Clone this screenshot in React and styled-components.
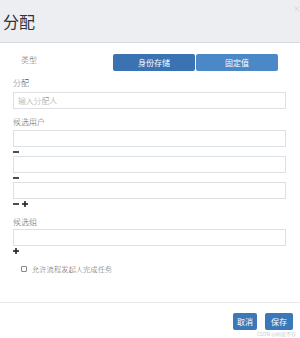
import React from "react";
import styled, { createGlobalStyle } from "styled-components";

const Global = createGlobalStyle`
  html, body { margin: 0; padding: 0; background: #fff; }
  body { font-family: "Noto Sans CJK SC", "Liberation Sans", sans-serif; }
  * { box-sizing: border-box; }
`;

const Dialog = styled.div`
  position: relative;
  width: 300px;
  height: 338px;
  display: flex;
  flex-direction: column;
  background: #fff;
  overflow: hidden;
`;

const Header = styled.div`
  height: 43px;
  flex: none;
  background: #eceef2;
  border-bottom: 1px solid #d6dae0;
  display: flex;
  align-items: center;
  padding-left: 3px;
  position: relative;
`;

const Title = styled.h3`
  margin: 0;
  font-size: 16px;
  font-weight: 400;
  color: #333;
  line-height: 1;
`;

const Close = styled.span`
  position: absolute;
  right: 0;
  top: 3px;
  font-size: 7px;
  color: #c8ccd2;
`;

const Body = styled.div`
  flex: 1;
  padding: 0 14px 0 13px;
  display: flex;
  flex-direction: column;
`;

const TypeRow = styled.div`
  display: flex;
  align-items: center;
  margin-top: 11px;
  height: 17px;
`;

const TypeLabel = styled.span`
  width: 100px;
  padding-left: 8px;
  font-size: 8px;
  font-weight: 300;
  color: #666;
  margin-top: -7px;
`;

const Toggle = styled.div`
  display: flex;
  gap: 1px;
`;

const ToggleButton = styled.button`
  width: 82px;
  height: 17px;
  border: none;
  border-radius: 2px;
  background: ${(p) => (p.$active ? "#3a72b2" : "#4a88c8")};
  color: #fff;
  font-family: inherit;
  font-size: 8px;
  padding: 0;
  line-height: 17px;
`;

const Label = styled.div`
  font-size: 8px;
  font-weight: 300;
  color: #666;
  line-height: 10px;
  margin-top: ${(p) => p.$mt || 0}px;
  margin-bottom: ${(p) => p.$mb || 3}px;
`;

const Input = styled.div`
  width: 273px;
  height: 17px;
  border: 1px solid #dcdfe3;
  background: #fff;
  font-size: 7.8px;
  font-weight: 300;
  color: #999;
  line-height: 15px;
  padding-left: 4px;
`;

const IconRow = styled.div`
  height: 9px;
  display: flex;
  align-items: center;
  gap: 3px;
  padding-top: 1px;
`;

const Glyph = ({ plus }) => (
  <svg width="6" height="6" viewBox="0 0 6 6">
    <rect x="0" y="2.2" width="6" height="1.6" fill="#222" />
    {plus && <rect x="2.2" y="0" width="1.6" height="6" fill="#222" />}
  </svg>
);

const CheckRow = styled.label`
  display: flex;
  align-items: center;
  gap: 5px;
  height: 10px;
  padding-left: 8px;
  margin-top: 9px;
  font-size: 7.3px;
  font-weight: 300;
  color: #666;
`;

const Box = styled.span`
  width: 6px;
  height: 6px;
  border: 1px solid #888;
  border-radius: 1px;
  background: #fff;
`;

const Footer = styled.div`
  flex: none;
  height: 36px;
  border-top: 1px solid #e6e8eb;
  display: flex;
  justify-content: flex-end;
  align-items: flex-start;
  gap: 8px;
  padding: 10px 7px 0 0;
`;

const FooterButton = styled.button`
  height: 17px;
  width: ${(p) => p.$w}px;
  border: none;
  border-radius: 2px;
  background: #3a78b8;
  color: #fff;
  font-family: inherit;
  font-size: 8px;
  padding: 0;
`;

const Watermark = styled.span`
  position: absolute;
  right: 4px;
  bottom: 1px;
  font-size: 5px;
  color: #c9ccd0;
`;

export default function App() {
  return (
    <Dialog>
      <Global />
      <Header>
        <Title>分配</Title>
        <Close>×</Close>
      </Header>
      <Body>
        <TypeRow>
          <TypeLabel>类型</TypeLabel>
          <Toggle>
            <ToggleButton $active>身份存储</ToggleButton>
            <ToggleButton>固定值</ToggleButton>
          </Toggle>
        </TypeRow>
        <Label $mt={7} $mb={4}>分配</Label>
        <Input>输入分配人</Input>
        <Label $mt={8} $mb={3}>候选用户</Label>
        <Input />
        <IconRow><Glyph /></IconRow>
        <Input />
        <IconRow><Glyph /></IconRow>
        <Input />
        <IconRow><Glyph /><Glyph plus /></IconRow>
        <Label $mt={9} $mb={2}>候选组</Label>
        <Input />
        <IconRow><Glyph plus /></IconRow>
        <CheckRow><Box />允许流程发起人完成任务</CheckRow>
      </Body>
      <Footer>
        <FooterButton $w={24}>取消</FooterButton>
        <FooterButton $w={28}>保存</FooterButton>
      </Footer>
      <Watermark>CSDN @码农不存</Watermark>
    </Dialog>
  );
}
